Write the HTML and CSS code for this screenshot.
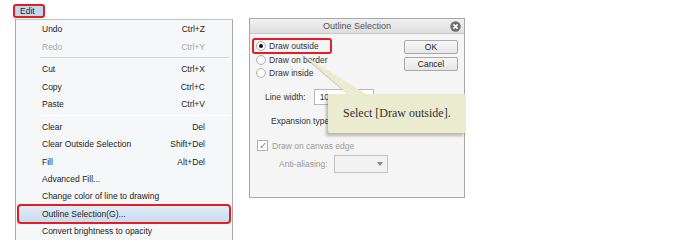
FILE: index.html
```html
<!DOCTYPE html>
<html lang="en">
<head>
    <meta charset="UTF-8">
    <title>Outline Selection</title>
    <link rel="stylesheet" href="styles.css">
</head>
<body>
    <div class="page">
        <div class="menu-col">
            <div class="edit-btn">Edit</div>
            <ul class="menu">
                <li class="item"><span>Undo</span><span>Ctrl+Z</span></li>
                <li class="item disabled"><span>Redo</span><span>Ctrl+Y</span></li>
                <li class="sep"></li>
                <li class="item"><span>Cut</span><span>Ctrl+X</span></li>
                <li class="item"><span>Copy</span><span>Ctrl+C</span></li>
                <li class="item"><span>Paste</span><span>Ctrl+V</span></li>
                <li class="sep"></li>
                <li class="item"><span>Clear</span><span>Del</span></li>
                <li class="item"><span>Clear Outside Selection</span><span>Shift+Del</span></li>
                <li class="item"><span>Fill</span><span>Alt+Del</span></li>
                <li class="item"><span>Advanced Fill...</span></li>
                <li class="item"><span>Change color of line to drawing</span></li>
                <li class="item active"><span>Outline Selection(G)...</span></li>
                <li class="item"><span>Convert brightness to opacity</span></li>
            </ul>
        </div>

        <div class="dialog">
            <div class="title-bar">
                <span>Outline Selection</span>
                <svg class="close" width="11" height="11" viewBox="0 0 11 11">
                    <circle cx="5.5" cy="5.5" r="5.2" fill="#6f6f6f"/>
                    <path d="M3.4 3.4 L7.6 7.6 M7.6 3.4 L3.4 7.6" stroke="#fff" stroke-width="1.6"/>
                </svg>
            </div>
            <div class="dialog-body">
                <div class="top-row">
                    <div class="radios">
                        <label class="radio picked"><span class="dot"></span>Draw outside</label>
                        <label class="radio"><span class="dot"></span>Draw on border</label>
                        <label class="radio"><span class="dot"></span>Draw inside</label>
                    </div>
                    <div class="buttons">
                        <div class="btn">OK</div>
                        <div class="btn">Cancel</div>
                    </div>
                </div>
                <div class="field line-width">
                    <span>Line width:</span>
                    <div class="input">10</div>
                </div>
                <div class="field expansion">
                    <span>Expansion type:</span>
                    <div class="select-stub"></div>
                </div>
                <label class="check"><span class="box">&#10003;</span>Draw on canvas edge</label>
                <div class="field anti">
                    <span>Anti-aliasing:</span>
                    <div class="select"><span class="arrow"></span></div>
                </div>
            </div>

            <svg class="pointer" width="90" height="60" viewBox="0 0 90 60">
                <polygon points="46,36 4,0 92,60 76,60" fill="#9a9a9a" opacity="0.55"/>
                <polygon points="47,36 8,2 126,75 86,75" fill="#ebebd0"/>
            </svg>
            <div class="tooltip">Select [Draw outside].</div>
        </div>
    </div>
</body>
</html>
```

FILE: styles.css
```css
* {
    box-sizing: border-box;
}

body {
    margin: 0;
    background: #fff;
    font-family: "Liberation Sans", Arial, sans-serif;
    color: #222;
}

.page {
    display: flex;
    align-items: flex-start;
    padding: 4px 0 0 13px;
}

/* ---- edit menu ---- */

.menu-col {
    width: 219px;
}

.edit-btn {
    width: 32px;
    height: 14px;
    border: 2px solid #e31d24;
    border-radius: 3px;
    background: #c3d9ef;
    font-size: 8.5px;
    line-height: 10px;
    padding-left: 5px;
}

.menu {
    list-style: none;
    margin: 1px 0 0 2px;
    padding: 0.5px 0 0;
    width: 218px;
    height: 221px;
    background: #f6f7f9;
    border-left: 1px solid #a9a9a9;
    border-right: 1px solid #a9a9a9;
    border-top: 1px solid #c4c4c4;
}

.item {
    display: flex;
    justify-content: space-between;
    align-items: center;
    height: 17.35px;
    padding: 0 27px 0 26px;
    font-size: 8.5px;
    color: #222;
}

.item.disabled {
    color: #a8a8a8;
}

.item.active {
    margin: 0 1px;
    padding-left: 23px;
    border: 2px solid #e31d24;
    border-radius: 4px;
    background: linear-gradient(#e2edf7, #c8dbee);
    height: 20px;
    margin-top: -1.3px;
    margin-bottom: -1.3px;
}

.sep {
    height: 5.5px;
    margin-left: 24px;
    margin-right: 2px;
    border-top: 2.5px solid #f6f7f9;
    border-bottom: 2px solid #f6f7f9;
    background: linear-gradient(#d3d6da 50%, #fff 50%);
}

/* ---- dialog ---- */

.dialog {
    position: relative;
    margin: 14px 0 0 17px;
    width: 216px;
    height: 180px;
    border: 1px solid #a8a8a8;
    background: #f5f5f5;
    font-size: 8.5px;
    color: #333;
}

.title-bar {
    display: flex;
    align-items: center;
    justify-content: center;
    height: 15px;
    background: linear-gradient(#f0f0f0, #dedede);
    border-bottom: 1px solid #c9c9c9;
    color: #555;
    font-size: 9px;
    position: relative;
}

.close {
    position: absolute;
    right: 3px;
    top: 2px;
}

.dialog-body {
    padding: 4px 0 0 2px;
}

.top-row {
    display: flex;
    justify-content: space-between;
}

.radios {
    display: flex;
    flex-direction: column;
}

.radio {
    display: flex;
    align-items: center;
    gap: 3px;
    height: 13.5px;
    padding-left: 4px;
    width: 80px;
}

.radio.picked {
    height: 16px;
    padding-left: 2px;
    border: 2px solid #e31d24;
    border-radius: 3px;
    margin-bottom: -1px;
}

.dot {
    width: 10px;
    height: 10px;
    border-radius: 50%;
    border: 1px solid #b4b4b4;
    background: radial-gradient(#fff 40%, #e6e6e6);
    display: flex;
    align-items: center;
    justify-content: center;
}

.picked .dot::after {
    content: "";
    width: 4px;
    height: 4px;
    border-radius: 50%;
    background: #111;
}

.buttons {
    display: flex;
    flex-direction: column;
    gap: 3px;
    padding: 2px 6px 0 0;
}

.btn {
    width: 54px;
    height: 14px;
    border: 1px solid #a9a9a9;
    border-radius: 2px;
    background: linear-gradient(#f7f7f7, #e6e6e6);
    text-align: center;
    line-height: 12px;
    color: #222;
}

.field {
    display: flex;
    align-items: center;
}

.line-width {
    margin-top: 9px;
    padding-left: 13px;
    gap: 8px;
}

.input {
    width: 60px;
    height: 16px;
    border: 1px solid #b8b8b8;
    background: #fff;
    padding-left: 5px;
    line-height: 14px;
}

.expansion {
    margin-top: 8px;
    padding-left: 19px;
    gap: 54px;
    height: 16px;
}

.select-stub {
    width: 38px;
    height: 14px;
    margin-top: 10px;
    border: 1px solid #c8c8c8;
    background: #eee;
}

.check {
    display: flex;
    align-items: center;
    gap: 4px;
    margin-top: 11px;
    padding-left: 5px;
    color: #9a9a9a;
}

.box {
    width: 11px;
    height: 11px;
    border: 1px solid #b0b0b0;
    background: #fff;
    color: #888;
    font-size: 10px;
    line-height: 9px;
    text-align: center;
}

.anti {
    margin-top: 4px;
    padding-left: 27px;
    gap: 6px;
    color: #9a9a9a;
}

.select {
    position: relative;
    width: 54px;
    height: 18px;
    border: 1px solid #c2c2c2;
    background: #f2f2f2;
}

.arrow {
    position: absolute;
    right: 4px;
    top: 6px;
    border-left: 3.5px solid transparent;
    border-right: 3.5px solid transparent;
    border-top: 4px solid #8a8a8a;
}

/* ---- callout ---- */

.pointer {
    position: absolute;
    left: 45px;
    top: 34px;
    overflow: visible;
}

.tooltip {
    position: absolute;
    left: 78px;
    top: 75px;
    width: 138px;
    height: 39px;
    background: #ebebd0;
    box-shadow: -2px 3px 3px rgba(0, 0, 0, 0.25);
    font-family: "Liberation Serif", "Times New Roman", serif;
    font-size: 12px;
    color: #333;
    display: flex;
    align-items: center;
    padding-left: 15px;
    border-radius: 2px;
}
```
